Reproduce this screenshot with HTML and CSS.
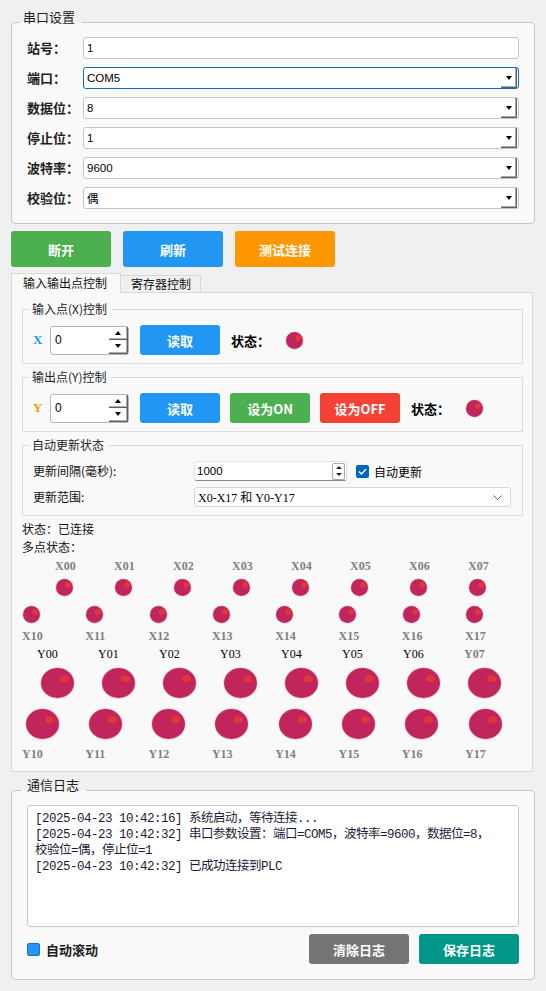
FILE: index.html
```html
<!DOCTYPE html>
<html lang="zh-CN">
<head>
<meta charset="utf-8">
<title>PLC 串口调试</title>
<link rel="stylesheet" href="styles.css">
</head>
<body>
<div class="app">
  <fieldset class="group main">
    <legend>串口设置</legend>
    <div class="form">
      <span class="flabel">站号：</span>
      <div class="field"><span class="fv">1</span></div>
      <span class="flabel">端口：</span>
      <div class="field combo focus"><span class="fv">COM5</span><span class="drop"></span></div>
      <span class="flabel">数据位：</span>
      <div class="field combo"><span class="fv">8</span><span class="drop"></span></div>
      <span class="flabel">停止位：</span>
      <div class="field combo"><span class="fv">1</span><span class="drop"></span></div>
      <span class="flabel">波特率：</span>
      <div class="field combo"><span class="fv">9600</span><span class="drop"></span></div>
      <span class="flabel">校验位：</span>
      <div class="field combo"><span class="fv">偶</span><span class="drop"></span></div>
    </div>
  </fieldset>

  <div class="actions">
    <button class="btn big green">断开</button>
    <button class="btn big blue">刷新</button>
    <button class="btn big orange">测试连接</button>
  </div>

  <div class="tabs">
    <div class="tab active">输入输出点控制</div>
    <div class="tab other">寄存器控制</div>
  </div>

  <div class="pane">
    <fieldset class="sub">
      <legend>输入点(X)控制</legend>
      <div class="ctrl">
        <span class="io xio">X</span>
        <div class="spin"><span class="spin-val">0</span><span class="spin-btns"><span class="sb up"></span><span class="sb down"></span></span></div>
        <button class="btn sm blue">读取</button>
        <span class="st">状态：</span>
        <span class="led"></span>
      </div>
    </fieldset>

    <fieldset class="sub gap">
      <legend>输出点(Y)控制</legend>
      <div class="ctrl">
        <span class="io yio">Y</span>
        <div class="spin"><span class="spin-val">0</span><span class="spin-btns"><span class="sb up"></span><span class="sb down"></span></span></div>
        <button class="btn sm blue">读取</button>
        <button class="btn sm green">设为ON</button>
        <button class="btn sm red">设为OFF</button>
        <span class="st">状态：</span>
        <span class="led"></span>
      </div>
    </fieldset>

    <fieldset class="sub gap auto">
      <legend>自动更新状态</legend>
      <div class="auto-grid">
        <span class="alabel">更新间隔(毫秒):</span>
        <div class="arow">
          <div class="wspin"><span class="wv">1000</span><span class="wbtns"><span class="wb wup"></span><span class="wb wdown"></span></span></div>
          <span class="chk"><span class="cbox"><svg width="9" height="7" viewBox="0 0 9 7"><path d="M1 3.6 L3.4 6 L8 1.2" stroke="#fff" stroke-width="1.4" fill="none"/></svg></span>自动更新</span>
        </div>
        <span class="alabel">更新范围:</span>
        <div class="wcombo"><span class="wv serif">X0-X17 和 Y0-Y17</span><svg class="chev" width="9" height="5" viewBox="0 0 9 5"><path d="M0.5 0.5 L4.5 4.5 L8.5 0.5" stroke="#5f5f5f" stroke-width="1" fill="none"/></svg></div>
      </div>
    </fieldset>

    <div class="status">状态：已连接</div>
    <div class="status">多点状态：</div>

    <div class="prow rowa">
      <div class="pt"><span class="pl g">X00</span><span class="led"></span></div>
      <div class="pt"><span class="pl g">X01</span><span class="led"></span></div>
      <div class="pt"><span class="pl g">X02</span><span class="led"></span></div>
      <div class="pt"><span class="pl g">X03</span><span class="led"></span></div>
      <div class="pt"><span class="pl g">X04</span><span class="led"></span></div>
      <div class="pt"><span class="pl g">X05</span><span class="led"></span></div>
      <div class="pt"><span class="pl g">X06</span><span class="led"></span></div>
      <div class="pt"><span class="pl g">X07</span><span class="led"></span></div>
    </div>
    <div class="prow rowb">
      <div class="pt"><span class="led"></span><span class="pl g">X10</span></div>
      <div class="pt"><span class="led"></span><span class="pl g">X11</span></div>
      <div class="pt"><span class="led"></span><span class="pl g">X12</span></div>
      <div class="pt"><span class="led"></span><span class="pl g">X13</span></div>
      <div class="pt"><span class="led"></span><span class="pl g">X14</span></div>
      <div class="pt"><span class="led"></span><span class="pl g">X15</span></div>
      <div class="pt"><span class="led"></span><span class="pl g">X16</span></div>
      <div class="pt"><span class="led"></span><span class="pl g">X17</span></div>
    </div>
    <div class="prow rowc">
      <div class="pt"><span class="pl k">Y00</span><span class="led lg"></span></div>
      <div class="pt"><span class="pl k">Y01</span><span class="led lg"></span></div>
      <div class="pt"><span class="pl k">Y02</span><span class="led lg"></span></div>
      <div class="pt"><span class="pl k">Y03</span><span class="led lg"></span></div>
      <div class="pt"><span class="pl k">Y04</span><span class="led lg"></span></div>
      <div class="pt"><span class="pl k">Y05</span><span class="led lg"></span></div>
      <div class="pt"><span class="pl k">Y06</span><span class="led lg"></span></div>
      <div class="pt"><span class="pl g">Y07</span><span class="led lg"></span></div>
    </div>
    <div class="prow rowd">
      <div class="pt"><span class="led lg"></span><span class="pl g">Y10</span></div>
      <div class="pt"><span class="led lg"></span><span class="pl g">Y11</span></div>
      <div class="pt"><span class="led lg"></span><span class="pl g">Y12</span></div>
      <div class="pt"><span class="led lg"></span><span class="pl g">Y13</span></div>
      <div class="pt"><span class="led lg"></span><span class="pl g">Y14</span></div>
      <div class="pt"><span class="led lg"></span><span class="pl g">Y15</span></div>
      <div class="pt"><span class="led lg"></span><span class="pl g">Y16</span></div>
      <div class="pt"><span class="led lg"></span><span class="pl g">Y17</span></div>
    </div>
  </div>

  <fieldset class="group log-group">
    <legend>通信日志</legend>
    <div class="log">[2025-04-23 10:42:16] 系统启动，等待连接...<br>[2025-04-23 10:42:32] 串口参数设置：端口=COM5，波特率=9600，数据位=8，<br>校验位=偶，停止位=1<br>[2025-04-23 10:42:32] 已成功连接到PLC</div>
    <div class="log-bar">
      <span class="bchk"><span class="bbox"></span>自动滚动</span>
      <button class="btn lbtn gray">清除日志</button>
      <button class="btn lbtn teal">保存日志</button>
    </div>
  </fieldset>
</div>
</body>
</html>
```
FILE: styles.css
```css
* { box-sizing: border-box; }
html, body { margin: 0; padding: 0; }
body {
  background: #f0f0f0;
  font-family: "Noto Sans CJK SC", "Microsoft YaHei", sans-serif;
  font-size: 12px;
  color: #000;
}
.app {
  width: 546px;
  height: 991px;
  padding: 10px 11px 0;
  overflow: hidden;
}

/* group boxes */
.group {
  margin: 0;
  min-width: 0;
  border: 1px solid #c6c6c6;
  border-radius: 4px;
  background: #f9f9f9;
  padding: 3px 15px 14px;
}
.group > legend {
  font-size: 13px;
  line-height: 14px;
  padding: 0 6px 10px 3px;
  margin-left: -7px;
  color: #1e1e1e;
}
.form {
  display: grid;
  grid-template-columns: 56px 1fr;
  grid-auto-rows: 22px;
  row-gap: 8px;
}
.flabel {
  font-size: 13px;
  font-weight: bold;
  line-height: 22px;
  color: #1e1e1e;
}
.field {
  height: 22px;
  border: 1px solid #c5c5c5;
  border-radius: 3px;
  background: #fff;
  display: flex;
  align-items: center;
  padding-left: 3px;
  font-family: "Liberation Sans", "Noto Sans CJK SC", sans-serif;
  font-size: 11.5px;
}
.field .fv { flex: 1; }
.field.focus { border-color: #0f6cbd; }
.drop {
  align-self: flex-start;
  width: 16px;
  height: 20px;
  margin-right: 1px;
  border-right: 1px solid #5f5f5f;
  border-bottom: 1px solid #5f5f5f;
  box-shadow: inset -1px -1px 0 #a8a8a8;
  display: flex;
  align-items: center;
  justify-content: center;
}
.drop::before {
  content: "";
  border-left: 3.5px solid transparent;
  border-right: 3.5px solid transparent;
  border-top: 4px solid #000;
}

/* buttons */
.btn {
  border: none;
  border-radius: 3px;
  color: #fff;
  font-family: "Noto Sans CJK SC", sans-serif;
  font-weight: bold;
  font-size: 13px;
  padding: 0;
  cursor: pointer;
}
.green { background: #4caf50; }
.blue { background: #2196f3; }
.orange { background: #ff9800; }
.red { background: #f44336; }
.gray { background: #757575; }
.teal { background: #009688; }
.actions {
  display: flex;
  gap: 12px;
  margin-top: 7px;
}
.btn.big { width: 100px; height: 36px; }
.btn.sm { width: 80px; height: 30px; }
.btn.lbtn { width: 100px; height: 30px; }

/* tabs */
.tabs {
  display: flex;
  align-items: flex-end;
  height: 20px;
  margin-top: 6px;
  margin-bottom: -1px;
  position: relative;
  z-index: 1;
}
.tab {
  font-size: 12px;
  color: #111;
  border: 1px solid #d9d9d9;
}
.tab.active {
  width: 110px;
  height: 20px;
  border-bottom: none;
  background: #f9f9f9;
  padding-left: 11px;
  line-height: 18px;
}
.tab.other {
  width: 80px;
  height: 18px;
  border-left: none;
  border-bottom-color: #dadada;
  background: #f0f0f0;
  padding-left: 10px;
  line-height: 16px;
}

/* pane */
.pane {
  width: 522px;
  border: 1px solid #dadada;
  background: #f9f9f9;
  padding: 9px 9px 10px 10px;
}
.sub {
  margin: 0;
  min-width: 0;
  border: 1px solid #dcdcdc;
  padding: 9px 10px 8px;
}
.sub.gap { margin-top: 6px; }
.sub > legend {
  font-size: 12px;
  line-height: 14px;
  padding: 0 4px 0 2px;
  margin-left: -3px;
  color: #1e1e1e;
}
.ctrl {
  display: flex;
  align-items: center;
  height: 30px;
}
.io {
  width: 17px;
  font-family: "Liberation Serif", serif;
  font-weight: bold;
  font-size: 13px;
}
.xio { color: #2196f3; }
.yio { color: #ff9800; }
.spin {
  width: 79px;
  height: 29px;
  border: 1px solid #b5b5b5;
  border-radius: 3px;
  background: #fff;
  display: flex;
  margin-right: 11px;
}
.spin-val {
  flex: 1;
  padding-left: 4px;
  line-height: 27px;
  font-family: "Liberation Sans", sans-serif;
  font-size: 12px;
}
.spin-btns {
  width: 19px;
  display: flex;
  flex-direction: column;
}
.sb {
  flex: 1;
  border-right: 1px solid #5f5f5f;
  border-bottom: 1px solid #5f5f5f;
  box-shadow: inset -1px -1px 0 #b0b0b0;
  display: flex;
  align-items: center;
  justify-content: center;
}
.sb::before {
  content: "";
  border-left: 3.5px solid transparent;
  border-right: 3.5px solid transparent;
}
.sb.up::before { border-bottom: 4px solid #000; }
.sb.down::before { border-top: 4px solid #000; }
.ctrl .btn + .btn { margin-left: 10px; }
.st {
  margin-left: 11px;
  font-size: 13px;
  font-weight: bold;
  width: 39px;
}
.ctrl .led { margin-left: 16px; }

/* auto update */
.auto-grid {
  display: grid;
  grid-template-columns: 161px 317px;
  grid-auto-rows: 20px;
  row-gap: 6px;
  align-items: center;
}
.alabel { font-size: 12px; line-height: 20px; color: #111; }
.arow { display: flex; align-items: center; }
.wspin {
  width: 153px;
  height: 20px;
  background: #fff;
  border: 1px solid #e3e3e3;
  border-bottom: 1px solid #8a8a8a;
  border-radius: 3px;
  display: flex;
  align-items: center;
  padding: 0 1px 0 2px;
}
.wv {
  flex: 1;
  font-family: "Liberation Sans", sans-serif;
  font-size: 11.5px;
}
.wv.serif { font-family: "Liberation Serif", "Noto Sans CJK SC", serif; font-size: 12px; }
.wbtns {
  width: 13px;
  height: 17px;
  border: 1px solid #a9a9a9;
  border-radius: 2px;
  display: flex;
  flex-direction: column;
}
.wb { flex: 1; display: flex; align-items: center; justify-content: center; }
.wb::before {
  content: "";
  border-left: 3px solid transparent;
  border-right: 3px solid transparent;
}
.wup::before { border-bottom: 3px solid #222; }
.wdown::before { border-top: 3px solid #222; }
.chk {
  display: flex;
  align-items: center;
  margin-left: 9px;
  font-size: 12px;
}
.cbox {
  width: 13px;
  height: 13px;
  border-radius: 2px;
  background: #0067c0;
  display: flex;
  align-items: center;
  justify-content: center;
  margin-right: 5px;
}
.wcombo {
  width: 317px;
  height: 20px;
  background: #fff;
  border: 1px solid #d6d6d6;
  border-radius: 3px;
  display: flex;
  align-items: center;
  padding: 0 8px 0 3px;
}

/* multi point */
.status {
  font-size: 12px;
  line-height: 18px;
  color: #111;
}
.status:first-of-type { margin-top: 4px; }
.pane > .status { margin-top: 0; }
.sub.auto + .status { margin-top: 4px; }
.prow { display: grid; }
.pt { display: flex; flex-direction: column; align-items: flex-start; }
.pl {
  font-family: "Liberation Serif", serif;
  font-size: 12px;
  line-height: 14px;
}
.pl.g { color: #7f7f7f; font-weight: bold; }
.pl.k { color: #000; }
.rowa { grid-template-columns: repeat(8, 59px); margin: 3px 0 0 33px; }
.rowa .led { margin: 6px 0 0 1px; }
.rowb { grid-template-columns: repeat(8, 63.3px); margin-top: 10px; }
.rowb .led { margin-left: 1px; }
.rowb .pl { margin-top: 6px; }
.rowc { grid-template-columns: repeat(8, 61px); margin: 4px 0 0 15px; }
.rowc .led { margin: 7px 0 0 3.5px; }
.rowd { grid-template-columns: repeat(8, 63.3px); margin-top: 11px; }
.rowd .led { margin-left: 3.5px; }
.rowd .pl { margin-top: 8px; }

.led {
  display: block;
  flex: none;
  width: 17px;
  height: 17px;
  border-radius: 50%;
  background: radial-gradient(circle at 71% 36%, #e2363a 0 2.5px, #c2255c 3.3px);
  box-shadow: 0 0 0 0.5px rgba(194, 37, 92, 0.35);
}
.led.lg {
  width: 33px;
  height: 30px;
  background: radial-gradient(ellipse 4.8px 3.8px at 71% 36%, #e0363a 0 88%, #c2255c 100%);
}

/* log */
.log-group { margin-top: 6px; padding-bottom: 15px; }
.log-group > legend { padding: 0 7px 10px 6px; margin-left: -6px; }
.log {
  height: 122px;
  background: #fff;
  border: 1px solid #c8c8c8;
  border-radius: 3px;
  padding: 5px 7px;
  font-family: "Liberation Mono", "Noto Sans CJK SC", monospace;
  font-size: 12.5px;
  letter-spacing: -0.5px;
  line-height: 16px;
  color: #1c1c38;
}
.log-bar {
  display: flex;
  align-items: center;
  height: 30px;
  margin-top: 7px;
  gap: 10px;
}
.bchk {
  display: flex;
  align-items: center;
  font-size: 13px;
  font-weight: bold;
  color: #1e1e1e;
  margin-right: auto;
}
.bbox {
  width: 13px;
  height: 13px;
  background: #2196f3;
  border: 1px solid #1a6fc0;
  border-radius: 2px;
  margin-right: 6px;
}
```
